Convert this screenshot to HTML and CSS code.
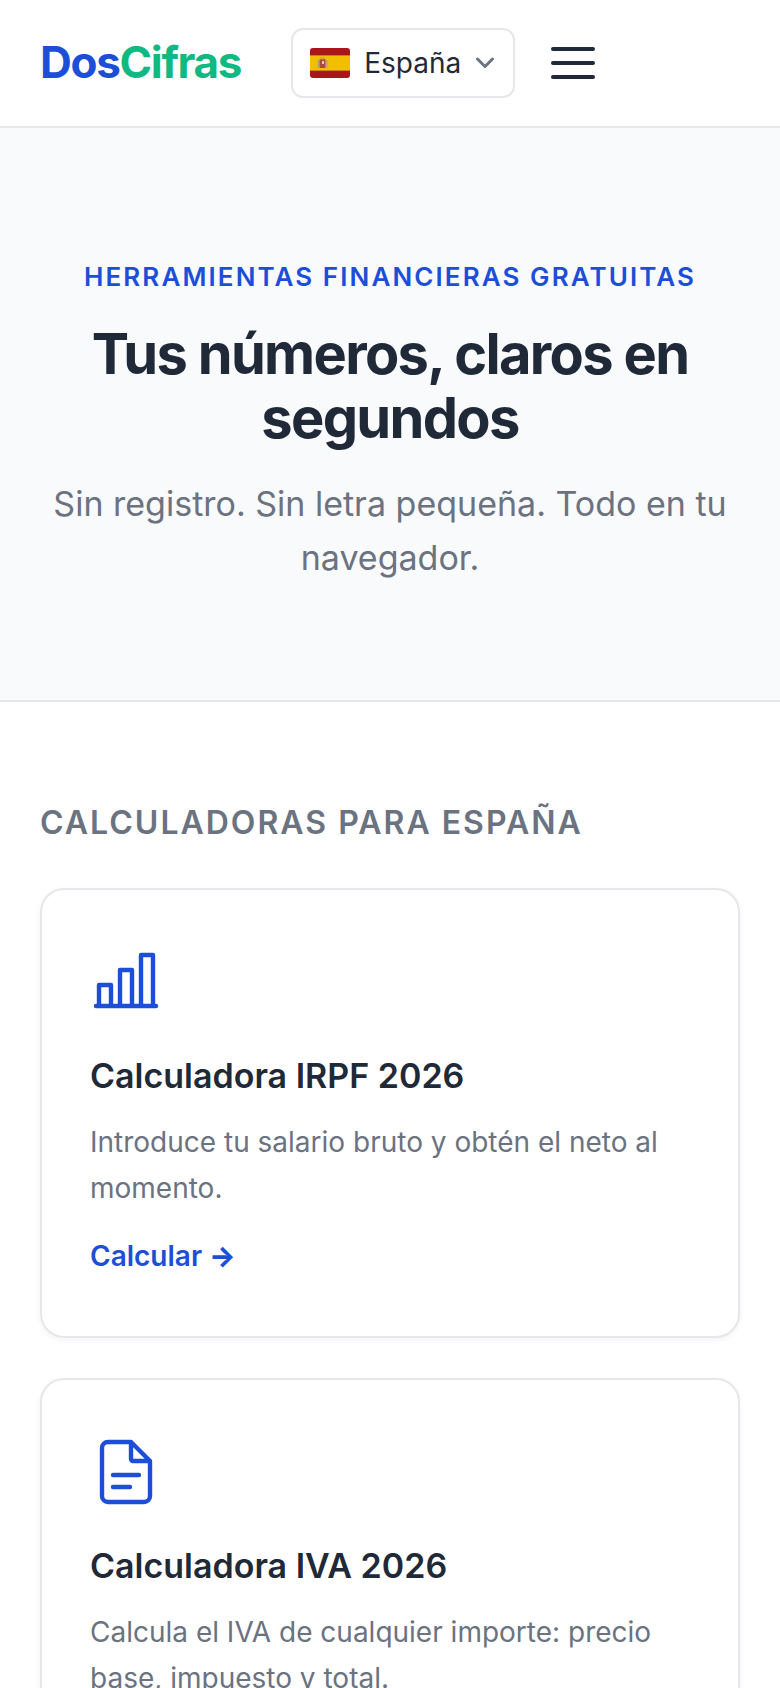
FILE: index.html
```html
<!DOCTYPE html>
<html lang="es">
<head>
  <meta charset="UTF-8">
  <meta name="viewport" content="width=device-width, initial-scale=1.0">
  <title>DosCifras</title>
  <link rel="stylesheet" href="styles.css">
</head>
<body>

<header class="header">
  <a class="logo" href="#">Dos<span class="logo-green">Cifras</span></a>
  <button class="country">
    <svg class="flag" viewBox="0 0 40 30">
      <rect width="40" height="30" rx="3" fill="#aa151b"/>
      <rect y="7.5" width="40" height="15" fill="#f1bf00"/>
      <path d="M0 7.500h40M0 22.500h40" stroke="#c98a0c" stroke-width="0.8"/>
      <rect x="9.500" y="11" width="6" height="9" rx="1" fill="#ad4b3a"/>
      <rect x="10.500" y="9.500" width="4" height="2" fill="#c8a24a"/>
      <rect x="7.500" y="12" width="1.400" height="8" fill="#a9a58a"/>
      <rect x="16.100" y="12" width="1.400" height="8" fill="#a9a58a"/>
      <rect x="12" y="13" width="2" height="3" fill="#e8c9a0"/>
    </svg>
    <span>España</span>
    <svg class="chevron" viewBox="0 0 20 20"><path d="M2.500 6l7.500 7.500L17.500 6" fill="none" stroke="#6b7280" stroke-width="3" stroke-linecap="round" stroke-linejoin="round"/></svg>
  </button>
  <button class="menu" aria-label="Menu">
    <span class="menu-line"></span>
    <span class="menu-line"></span>
    <span class="menu-line"></span>
  </button>
</header>

<section class="hero">
  <p class="hero-label">HERRAMIENTAS FINANCIERAS GRATUITAS</p>
  <h1 class="hero-title">Tus números, claros en segundos</h1>
  <p class="hero-sub">Sin registro. Sin letra pequeña. Todo en tu navegador.</p>
</section>

<main class="tools">
  <h2 class="tools-title">CALCULADORAS PARA ESPAÑA</h2>

  <a class="card" href="#">
    <svg class="card-icon" viewBox="0 0 80 80">
      <path d="M6 68h60M9 68V47h12v21M30 68V32h12v36M51 68V17h12v51" fill="none" stroke="#1d4ed8" stroke-width="4.400" stroke-linecap="round" stroke-linejoin="round"/>
    </svg>
    <h3 class="card-title">Calculadora IRPF 2026</h3>
    <p class="card-text">Introduce tu salario bruto y obtén el neto al momento.</p>
    <span class="card-link">Calcular <span class="card-arrow">→</span></span>
  </a>

  <a class="card" href="#">
    <svg class="card-icon" viewBox="0 0 80 80">
      <path d="M41 14H18a6 6 0 0 0-6 6v48a6 6 0 0 0 6 6h36a6 6 0 0 0 6-6V33zM41 14v17a2 2 0 0 0 2 2h17M23 47h26M23 59h17" fill="none" stroke="#1d4ed8" stroke-width="4.400" stroke-linecap="round" stroke-linejoin="round"/>
    </svg>
    <h3 class="card-title">Calculadora IVA 2026</h3>
    <p class="card-text">Calcula el IVA de cualquier importe: precio base, impuesto y total.</p>
    <span class="card-link">Calcular <span class="card-arrow">→</span></span>
  </a>
</main>

</body>
</html>
```

FILE: styles.css
```css
* {
  box-sizing: border-box;
}

body {
  margin: 0;
  background-color: #fff;
  color: #1f2937;
  font-family: "Inter", "Liberation Sans", sans-serif;
}

.header {
  display: flex;
  align-items: center;
  height: 128px;
  padding: 0 40px;
  border-bottom: 2px solid #e5e7eb;
}

.logo {
  margin-bottom: 2px;
  font-size: 44px;
  font-weight: 700;
  letter-spacing: -1.3px;
  color: #1d4ed8;
  text-decoration: none;
}

.logo-green {
  color: #10b981;
}

.country {
  display: flex;
  align-items: center;
  gap: 14px;
  width: 224px;
  height: 70px;
  margin-left: 50px;
  padding: 0 17px;
  background-color: #fff;
  border: 2px solid #e5e7eb;
  border-radius: 12px;
  font-family: inherit;
  font-size: 28px;
  color: #1f2937;
}

.flag {
  width: 40px;
  height: 30px;
}

.chevron {
  width: 20px;
  height: 20px;
}

.menu {
  display: flex;
  flex-direction: column;
  gap: 10px;
  margin-left: 36px;
  padding: 0;
  background: none;
  border: none;
}

.menu-line {
  display: block;
  width: 44px;
  height: 4px;
  background-color: #1f2937;
  border-radius: 2px;
}

.hero {
  height: 574px;
  padding: 133px 40px 0;
  background-color: #f9fafb;
  border-bottom: 2px solid #e5e7eb;
  text-align: center;
}

.hero-label {
  margin: 0 0 29px;
  font-size: 26px;
  line-height: 32px;
  font-weight: 600;
  letter-spacing: 2.1px;
  color: #1d4ed8;
}

.hero-title {
  margin: 0 0 27px;
  font-size: 56px;
  line-height: 64px;
  font-weight: 700;
  letter-spacing: -1.68px;
  color: #1f2937;
}

.hero-sub {
  margin: 0;
  font-size: 34px;
  line-height: 54px;
  color: #6b7280;
}

.tools {
  padding: 101px 40px 0;
}

.tools-title {
  margin: 0 0 45px;
  font-size: 32px;
  line-height: 40px;
  font-weight: 600;
  letter-spacing: 2px;
  color: #6b7280;
}

.card {
  display: block;
  height: 450px;
  margin-bottom: 40px;
  padding: 48px;
  background-color: #fff;
  border: 2px solid #e5e7eb;
  border-radius: 24px;
  box-shadow: 0 2px 6px rgba(0, 0, 0, 0.05);
  text-decoration: none;
}

.card-icon {
  display: block;
  width: 80px;
  height: 80px;
  margin-bottom: 36px;
}

.card-title {
  margin: 0 0 21px;
  font-size: 34px;
  line-height: 44px;
  font-weight: 600;
  color: #1f2937;
}

.card-text {
  margin: 0 0 28px;
  font-size: 28px;
  line-height: 46px;
  color: #6b7280;
}

.card-link {
  font-size: 28px;
  font-weight: 600;
  color: #1d4ed8;
}

.card-arrow {
  font-weight: 800;
}
```
